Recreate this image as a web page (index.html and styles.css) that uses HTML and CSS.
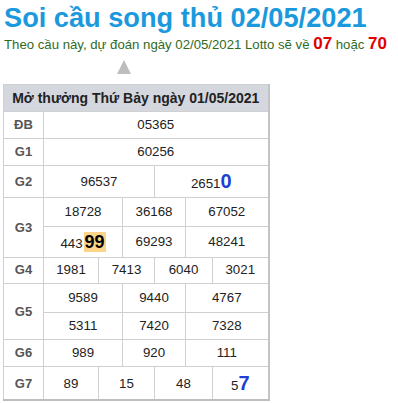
FILE: index.html
```html
<!DOCTYPE html>
<html lang="vi">
<head>
<meta charset="utf-8">
<title>Soi cầu song thủ 02/05/2021</title>
<link rel="stylesheet" href="styles.css">
</head>
<body>
<h1 class="title">Soi cầu song thủ 02/05/2021</h1>
<p class="lead">Theo cầu này, dự đoán ngày 02/05/2021 Lotto sẽ về <b class="num">07</b> hoặc <b class="num">70</b></p>
<div class="arrow"></div>
<table class="kq">
  <colgroup>
    <col class="c-lbl">
    <col class="c18"><col class="c18"><col class="c19">
    <col class="c24">
    <col class="c16"><col class="c16">
    <col class="c15"><col class="c16">
    <col class="c27">
    <col class="c19"><col class="c19"><col class="c18">
  </colgroup>
  <tr><th colspan="13">Mở thưởng Thứ Bảy ngày 01/05/2021</th></tr>
  <tr><td class="lbl">ĐB</td><td colspan="12">05365</td></tr>
  <tr><td class="lbl">G1</td><td colspan="12">60256</td></tr>
  <tr class="tall"><td class="lbl">G2</td><td colspan="6">96537</td><td colspan="6">2651<b class="hit">0</b></td></tr>
  <tr class="pad"><td class="lbl" rowspan="2">G3</td><td colspan="4">18728</td><td colspan="4">36168</td><td colspan="4">67052</td></tr>
  <tr><td colspan="4">443<b class="mark">99</b></td><td colspan="4">69293</td><td colspan="4">48241</td></tr>
  <tr class="short"><td class="lbl">G4</td><td colspan="3">1981</td><td colspan="3">7413</td><td colspan="3">6040</td><td colspan="3">3021</td></tr>
  <tr class="pad"><td class="lbl" rowspan="2">G5</td><td colspan="4">9589</td><td colspan="4">9440</td><td colspan="4">4767</td></tr>
  <tr><td colspan="4">5311</td><td colspan="4">7420</td><td colspan="4">7328</td></tr>
  <tr><td class="lbl">G6</td><td colspan="4">989</td><td colspan="4">920</td><td colspan="4">111</td></tr>
  <tr class="tall last"><td class="lbl">G7</td><td colspan="3">89</td><td colspan="3">15</td><td colspan="3">48</td><td colspan="3">5<b class="hit">7</b></td></tr>
</table>
</body>
</html>
```
FILE: styles.css
```css
body {
  margin: 0;
  padding: 0 3px;
  background: #fff;
  font-family: "Liberation Sans", Arial, sans-serif;
}
.title {
  margin: 2px 0 0 1px;
  font-size: 27.2px;
  line-height: 32px;
  font-weight: bold;
  color: #1b99dc;
}
.lead {
  margin: 0 0 0 1px;
  font-size: 13.2px;
  line-height: 20px;
  color: #2f6b1f;
}
.lead .num {
  font-size: 17px;
  font-weight: bold;
  color: #e00000;
}
.arrow {
  width: 0;
  height: 0;
  margin: 5px 0 10px 114px;
  border-left: 7.5px solid transparent;
  border-right: 7.5px solid transparent;
  border-bottom: 14px solid #bdbdbd;
}
.kq {
  border-collapse: collapse;
  table-layout: fixed;
  font-size: 13.3px;
  color: #222;
  border-right: 2px solid #c4c4c4;
  border-bottom: 2px solid #bdbdbd;
}
.c-lbl { width: 40px; }
.c15 { width: 15px; }
.c16 { width: 16px; }
.c18 { width: 18px; }
.c19 { width: 19px; }
.c24 { width: 24px; }
.c27 { width: 27px; }
.kq th,
.kq td {
  border: 1px solid #d0d0d0;
  text-align: center;
  vertical-align: middle;
  padding: 5px 0;
  line-height: 16px;
  white-space: nowrap;
}
.kq th {
  background: #d5d7de;
  font-size: 14px;
  font-weight: bold;
  color: #222;
}
.kq .lbl {
  font-size: 13px;
  font-weight: bold;
  color: #555;
}
.kq .pad td { padding: 6px 0; }
.kq .short td { padding: 4px 0 5px; }
.kq .last td { padding: 6px 0 5px; }
.hit {
  font-size: 20px;
  line-height: 20px;
  color: #1f3fd6;
}
.mark {
  margin-left: 1px;
  padding: 0 1px;
  font-size: 18px;
  line-height: 20px;
  color: #000;
  background: #fdd58a;
}
```
